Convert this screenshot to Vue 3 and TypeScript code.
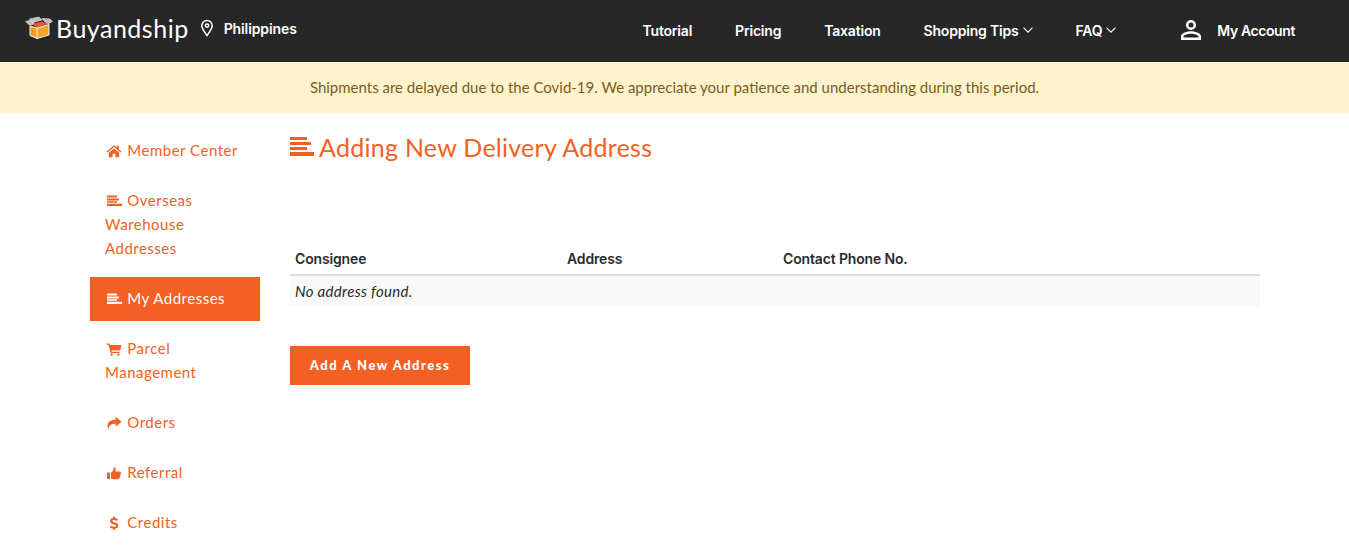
<script setup lang="ts">
interface NavLink {
  label: string;
  caret?: boolean;
}

interface SideLink {
  label: string;
  icon: string;
  active?: boolean;
}

const navLinks: NavLink[] = [
  { label: "Tutorial" },
  { label: "Pricing" },
  { label: "Taxation" },
  { label: "Shopping Tips", caret: true },
  { label: "FAQ", caret: true },
];

const sideLinks: SideLink[] = [
  { label: "Member Center", icon: "home" },
  { label: "Overseas Warehouse Addresses", icon: "lines" },
  { label: "My Addresses", icon: "lines", active: true },
  { label: "Parcel Management", icon: "cart" },
  { label: "Orders", icon: "share" },
  { label: "Referral", icon: "thumb" },
  { label: "Credits", icon: "dollar" },
];

const columns = ["Consignee", "Address", "Contact Phone No."];
</script>

<template>
  <div class="page">
    <header class="topbar">
      <div class="brand">
        <svg class="logo" width="28" height="24" viewBox="0 0 28 24">
          <path d="M7 8 L17 5.5 L23 8 L12 11.5 Z" fill="#e8582c" />
          <path d="M5 10 L12 12 V22.5 L5 19.5 Z" fill="#f39a1f" />
          <path d="M12 12 L24 8.5 V19 L12 22.5 Z" fill="#f7a823" />
          <path d="M5 10 L12 12 L24 8.5 M12 12 V22.5 M5 10 V19.5 L12 22.5 L24 19 V8.5" fill="none" stroke="#f2f2f2" stroke-width="1" />
          <path d="M5 9.5 L.5 5.5 L6 4 L9 7.5 Z M8 6.5 L4.5 3 L14 1 L17 4 Z M19 5 L17 2.5 L25 3 L27.5 5.5 L23 8 Z" fill="#bdbdbd" stroke="#e6e6e6" stroke-width=".6" />
        </svg>
        <span class="brand-name">Buyandship</span>
        <svg class="pin" width="14" height="18" viewBox="0 0 14 18" fill="none" stroke="#fff" stroke-width="1.5">
          <path d="M7 16.6 C4.6 13 1.8 10 1.8 6.6 A5.2 5.2 0 0 1 12.2 6.6 C12.2 10 9.4 13 7 16.6 Z" />
          <circle cx="7" cy="6.6" r="1.7" />
        </svg>
        <span class="country">Philippines</span>
      </div>
      <nav class="nav">
        <a v-for="link in navLinks" :key="link.label" class="nav-link">
          {{ link.label }}
          <svg v-if="link.caret" class="caret" width="10" height="6" viewBox="0 0 10 6" fill="none" stroke="#fff" stroke-width="1.1">
            <path d="M.5 .7 L5 5.2 L9.5 .7" />
          </svg>
        </a>
        <a class="nav-link account">
          <svg width="30" height="30" viewBox="0 0 24 24" fill="#fff">
            <path d="M12 4a4 4 0 1 0 0 8 4 4 0 0 0 0-8zm0 2a2 2 0 1 1 0 4 2 2 0 0 1 0-4zM12 13c-2.7 0-8 1.3-8 4v3h16v-3c0-2.7-5.3-4-8-4zm0 2c3 0 5.9 1.3 6 2v1H6v-1c.1-.7 3-2 6-2z" />
          </svg>
          <span>My Account</span>
        </a>
      </nav>
    </header>

    <div class="notice">
      Shipments are delayed due to the Covid-19. We appreciate your patience and understanding during this period.
    </div>

    <div class="container">
      <aside class="sidebar">
        <a
          v-for="item in sideLinks"
          :key="item.label"
          class="side-link"
          :class="{ active: item.active }"
        >
          <svg class="side-icon" width="16" height="14" viewBox="0 0 16 14" fill="currentColor">
            <path v-if="item.icon === 'home'" d="M8 1.2 L.6 7.4 L1.5 8.5 L8 3.1 L14.5 8.5 L15.4 7.4 L12.8 5.2 V1.8 H10.8 V3.5 Z M8 4.4 L2.8 8.7 V13.2 H6.6 V9.8 H9.4 V13.2 H13.2 V8.7 Z" />
            <path v-else-if="item.icon === 'lines'" d="M1 1.5 H11 V3.5 H1 Z M1 4.4 H13 V6.4 H1 Z M1 7.3 H11 V8.8 H1 Z M1 9.8 H16 V12 H1 Z" />
            <path v-else-if="item.icon === 'cart'" d="M.6 1.6 H3.4 L3.9 3 H15.4 L14.2 8.6 H5.4 L5.7 9.8 H13.6 V11 H4.6 L2.6 2.8 H.6 Z M5.6 11.4 A1.2 1.2 0 1 1 5.6 13.8 A1.2 1.2 0 0 1 5.6 11.4 Z M12.4 11.4 A1.2 1.2 0 1 1 12.4 13.8 A1.2 1.2 0 0 1 12.4 11.4 Z" />
            <path v-else-if="item.icon === 'share'" d="M9.6 .8 L15.6 5.8 L9.6 10.8 V7.8 C6 7.8 3 8.4 2.4 13.4 C.6 9.6 1 3.8 9.6 3.8 Z" />
            <path v-else-if="item.icon === 'thumb'" d="M1 6.6 H4 V13 H1 Z M5 6.6 C6.8 5.6 7.6 3.4 7.8 1.2 C9.6 .8 10.2 3 9.2 5.6 H13.8 C15.2 5.8 15.2 7.4 14.4 7.8 C15 8.6 14.8 9.6 14 9.9 C14.4 10.8 14 11.6 13.2 11.8 C13.3 12.8 12.8 13.2 12 13.2 H7.4 C6.4 13.2 5.8 12.8 5 12.6 Z" />
            <path v-else d="M7.2 .4 H9 V2.1 C10.4 2.3 11.5 2.9 12 3.4 L11 5.1 C10.2 4.5 9.1 4 8 4 C7 4 6.4 4.4 6.4 5 C6.4 6.7 12.3 6 12.3 9.8 C12.3 11.4 11.1 12.5 9 12.7 V14 H7.2 V12.7 C5.8 12.5 4.6 11.9 3.9 11.2 L5 9.6 C5.9 10.3 7 10.8 8.1 10.8 C9.2 10.8 9.9 10.4 9.9 9.8 C9.9 8 4 8.8 4 5 C4 3.5 5.2 2.4 7.2 2.1 Z" />
          </svg>
          {{ item.label }}
        </a>
      </aside>

      <main class="content">
        <h1 class="title">
          <svg width="24" height="20" viewBox="0 0 24 20" fill="currentColor">
            <path d="M0 0 H17 V3 H0 Z M0 5 H21 V8 H0 Z M0 10 H17 V13 H0 Z M0 15 H24 V19 H0 Z" />
          </svg>
          Adding New Delivery Address
        </h1>

        <table class="table">
          <thead>
            <tr>
              <th v-for="col in columns" :key="col">{{ col }}</th>
            </tr>
          </thead>
          <tbody>
            <tr>
              <td colspan="3"><em>No address found.</em></td>
            </tr>
          </tbody>
        </table>

        <button class="add-btn" type="button">Add A New Address</button>
      </main>
    </div>
  </div>
</template>

<style scoped>
.page {
  font-family: Lato, "Open Sans", sans-serif;
  font-size: 15px;
  color: #2b2b2b;
}

.topbar {
  display: flex;
  align-items: center;
  justify-content: space-between;
  height: 62px;
  padding: 0 54px 0 25px;
  background: #272727;
  color: #fff;
}

.brand {
  display: flex;
  align-items: center;
  padding-bottom: 6px;
}

.logo {
  margin-right: 3px;
}

.brand-name {
  font-size: 25px;
  line-height: 30px;
  letter-spacing: .5px;
}

.pin {
  margin: 0 10px 0 11px;
}

.country {
  font-family: Inter, sans-serif;
  font-size: 14px;
  font-weight: 600;
  letter-spacing: -.1px;
}

.nav {
  display: flex;
  align-items: center;
  gap: 43px;
  padding-bottom: 2px;
}

.nav-link {
  display: flex;
  align-items: center;
  font-family: Inter, sans-serif;
  font-size: 14px;
  font-weight: 600;
  letter-spacing: -.2px;
}

.caret {
  margin-left: 4px;
}

.account {
  gap: 11px;
  margin-left: 17px;
  letter-spacing: -.4px;
}

.notice {
  height: 51px;
  line-height: 51px;
  text-align: center;
  background: #fff2cd;
  color: #7a5d1c;
  font-size: 15px;
}

.container {
  display: flex;
  gap: 30px;
  width: 1170px;
  margin-left: 90px;
}

.sidebar {
  display: flex;
  flex-direction: column;
  gap: 6px;
  flex: none;
  width: 170px;
  padding-top: 16px;
}

.side-link {
  padding: 9px 15px 11px;
  line-height: 24px;
  letter-spacing: .5px;
  color: #f26023;
}

.side-link.active {
  background: #f26023;
  color: #fff;
}

.side-icon {
  margin: 0 1px 0 1px;
  vertical-align: -2px;
}

.content {
  flex: 1;
}

.title {
  display: flex;
  align-items: center;
  gap: 5px;
  margin: 18px 0 0;
  height: 32px;
  font-size: 25px;
  font-weight: 400;
  letter-spacing: .27px;
  color: #f26023;
}

.table {
  width: 100%;
  margin-top: 80px;
  border-collapse: collapse;
  table-layout: fixed;
}

.table th {
  box-sizing: border-box;
  padding: 5px;
  height: 32px;
  text-align: left;
  font-family: Inter, sans-serif;
  font-size: 14px;
  font-weight: 600;
  line-height: 20px;
  letter-spacing: -.15px;
  border-bottom: 2px solid #ddd;
}

.table th:nth-child(1) {
  width: 272px;
}

.table th:nth-child(2) {
  width: 216px;
}

.table td {
  padding: 0 5px;
  height: 30px;
  font-size: 15px;
  letter-spacing: .3px;
  background: #f9f9f9;
}

.add-btn {
  display: block;
  width: 180px;
  height: 39px;
  margin-top: 40px;
  padding: 0 0 2px;
  border: none;
  border-radius: 0;
  background: #f26023;
  color: #fff;
  font-family: Lato, sans-serif;
  font-size: 13px;
  font-weight: 900;
  letter-spacing: 1.5px;
}
</style>

<style>
html,
body {
  background: #fff;
}
</style>
